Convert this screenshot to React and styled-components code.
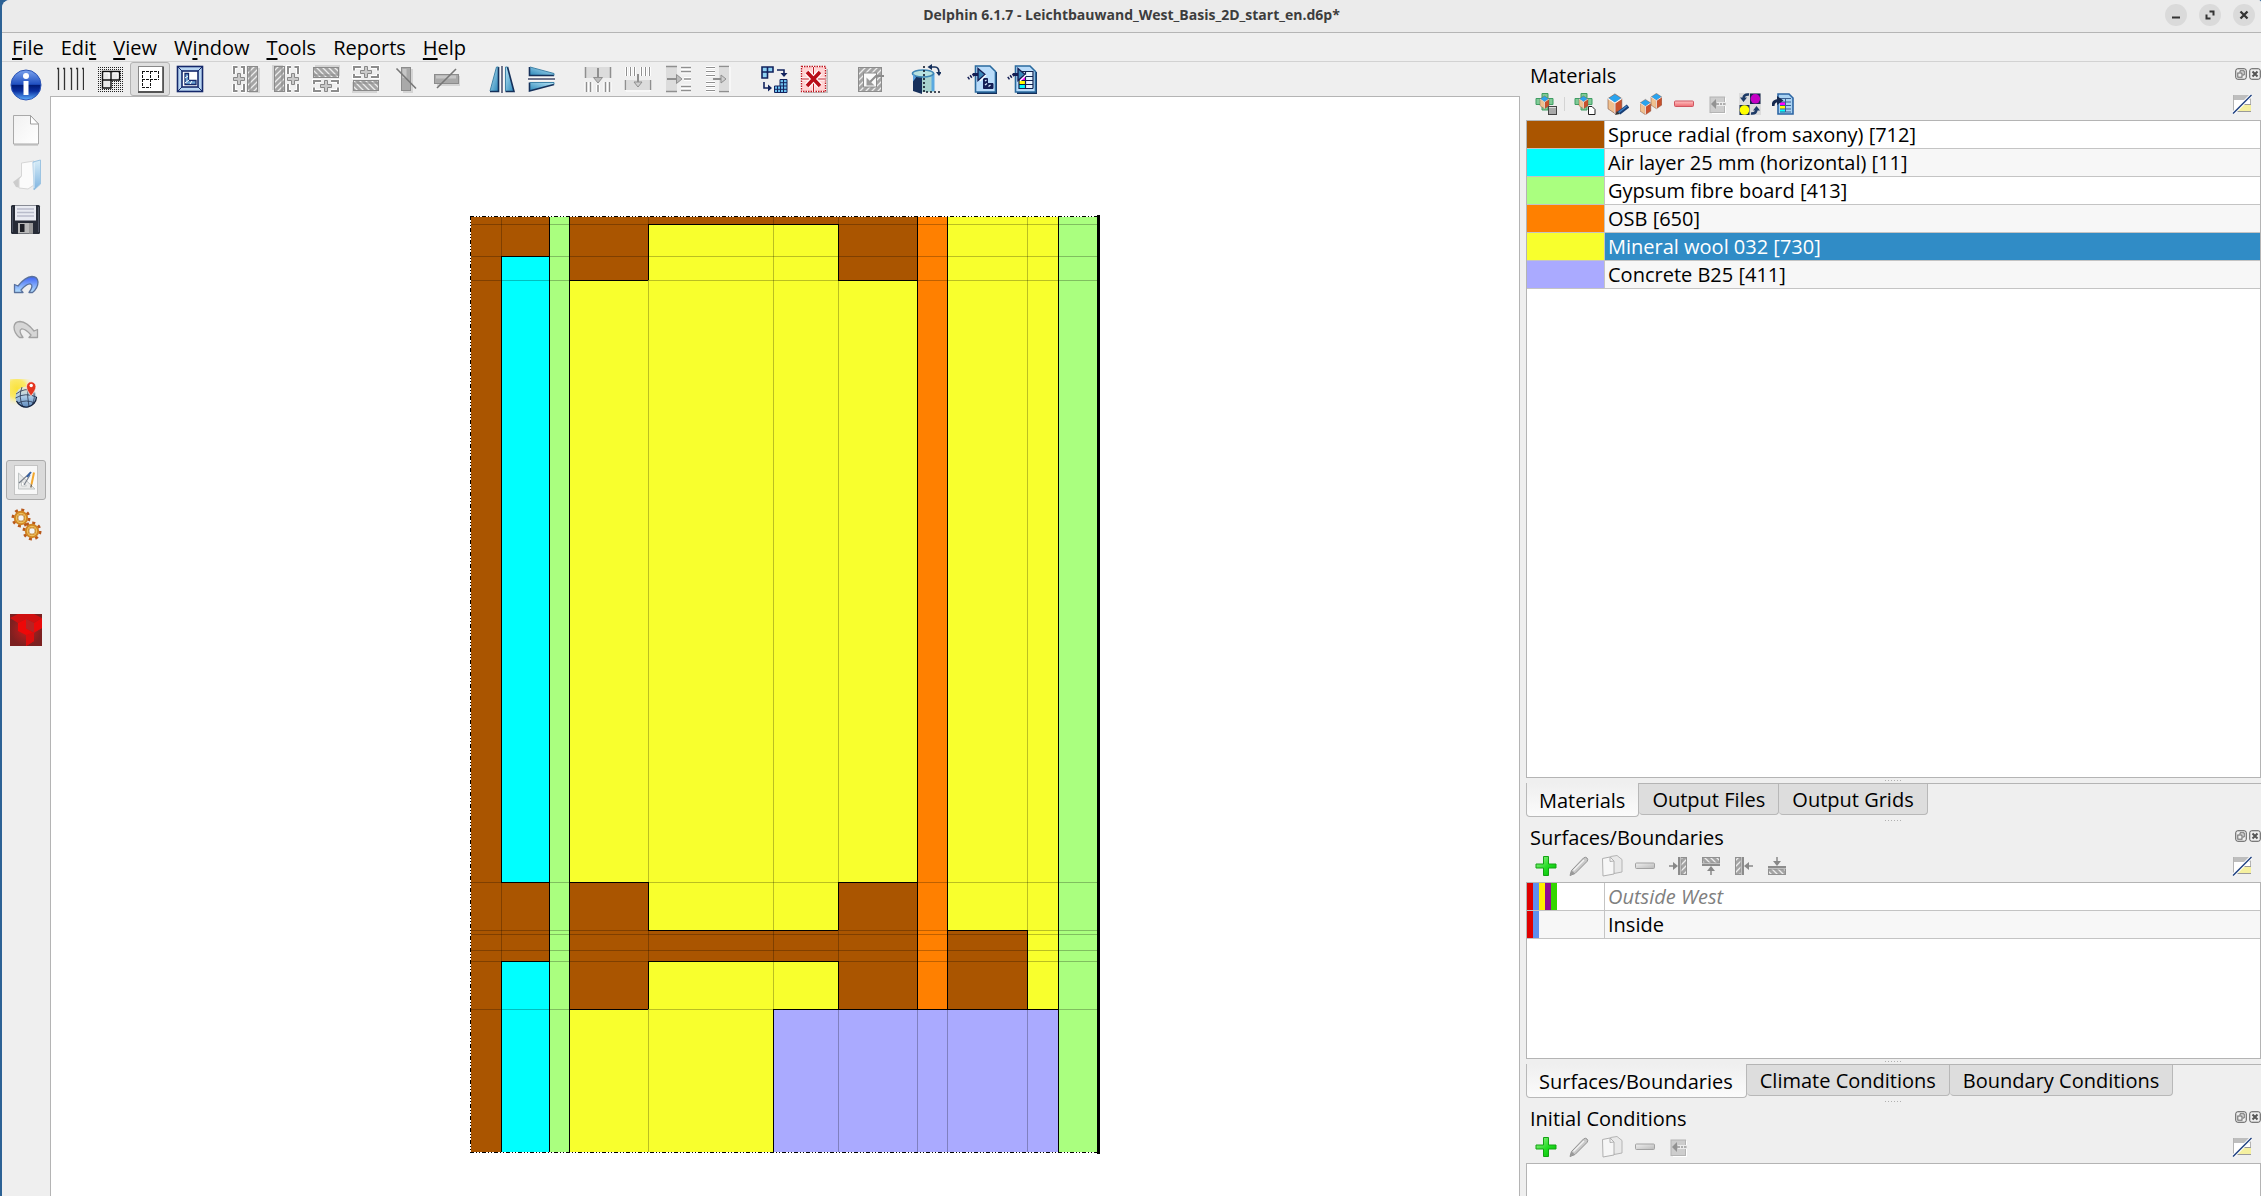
import { useState } from "react";
import styled, { createGlobalStyle } from "styled-components";

const MATERIALS = {
  W: "#aa5500",
  A: "#00ffff",
  G: "#aaff7f",
  O: "#ff8000",
  Y: "#f8ff2d",
  C: "#aaaaff",
};

const materialRows = [
  { color: MATERIALS.W, name: "Spruce radial (from saxony) [712]" },
  { color: MATERIALS.A, name: "Air layer 25 mm (horizontal) [11]" },
  { color: MATERIALS.G, name: "Gypsum fibre board [413]" },
  { color: MATERIALS.O, name: "OSB [650]" },
  { color: MATERIALS.Y, name: "Mineral wool 032 [730]" },
  { color: MATERIALS.C, name: "Concrete B25 [411]" },
];

const surfaceRows = [
  {
    stripes: ["#e00000", "#5f8fee", "#ffee00", "#8f0a94", "#33d600"],
    name: "Outside West",
    muted: true,
  },
  { stripes: ["#e00000", "#5f8fee"], name: "Inside" },
];

// grid lines of the construction and the material of each cell
const gridX = [0, 31, 79, 99, 178, 303, 368, 447, 477, 557, 588, 628];
const gridY = [1, 9, 41, 65, 667, 715, 719, 735, 746, 794, 937];
const cells = [
  "WWGWWWWOYYG",
  "WWGWYYWOYYG",
  "WAGWYYWOYYG",
  "WAGYYYYOYYG",
  "WWGWYYWOYYG",
  "WWGWWWWOWYG",
  "WWGWWWWOWYG",
  "WWGWWWWOWYG",
  "WAGWYYWOWYG",
  "WAGYYCCCCCG",
];

const Construction = () => {
  const fills = [];
  const edges = [];
  cells.forEach((row, r) => {
    [...row].forEach((cell, c) => {
      const x = gridX[c];
      const y = gridY[r];
      const w = gridX[c + 1] - x;
      const h = gridY[r + 1] - y;
      fills.push(
        <rect key={`f${r}-${c}`} x={x} y={y} width={w} height={h} fill={MATERIALS[cell]} />
      );
      if (c > 0) {
        const differs = row[c - 1] !== cell;
        edges.push(
          <rect key={`v${r}-${c}`} x={x} y={y} width="1" height={h} fillOpacity={differs ? 1 : 0.25} />
        );
      }
      if (r > 0) {
        const differs = cells[r - 1][c] !== cell;
        edges.push(
          <rect key={`h${r}-${c}`} x={x} y={y} width={w} height="1" fillOpacity={differs ? 1 : 0.25} />
        );
      }
    });
  });
  return (
    <svg width="630" height="939" shapeRendering="crispEdges" role="img" aria-label="Construction">
      {fills}
      {edges}
      <path d="M0 1.5H628M0 937.5H628M.5 1V938" fill="none" stroke="#fff" />
      <path
        d="M0 1.5H628M0 937.5H628M.5 1V938"
        fill="none"
        stroke="#000"
        strokeDasharray="4 2 1 2 1 2"
      />
      <rect x="627" y="0" width="3" height="939" />
    </svg>
  );
};

/* ---------- icons ---------- */

const SharedDefs = () => (
  <Defs aria-hidden="true">
    <defs>
      <pattern id="hatch" width="6" height="6" patternUnits="userSpaceOnUse">
        <rect width="6" height="6" fill="#a4a4a4" />
        <path d="M-1 7 7 -1M-1 1 1 -1M5 7 7 5" stroke="#ececec" strokeWidth="1.3" />
      </pattern>
      <pattern id="dots" width="2" height="2" patternUnits="userSpaceOnUse">
        <rect width="2" height="2" fill="#efefef" />
        <rect width="1" height="1" fill="#222" />
      </pattern>
      <linearGradient id="blueTri" x1="0" y1="0" x2="1" y2="1">
        <stop offset="0" stopColor="#b9e6f7" />
        <stop offset="1" stopColor="#2a86b8" />
      </linearGradient>
      <linearGradient id="info" x1="0" y1="0" x2="0" y2="1">
        <stop offset="0" stopColor="#7ba3ee" />
        <stop offset=".48" stopColor="#1f4fc0" />
        <stop offset=".5" stopColor="#001a73" />
        <stop offset=".7" stopColor="#0a2fa0" />
        <stop offset="1" stopColor="#5fb0ff" />
      </linearGradient>
      <linearGradient id="undo" x1="0" y1="0" x2="0" y2="1">
        <stop offset="0" stopColor="#3c62f5" />
        <stop offset="1" stopColor="#b8e4ff" />
      </linearGradient>
      <linearGradient id="paper" x1="0" y1="0" x2="1" y2="1">
        <stop offset="0" stopColor="#f1f1f1" />
        <stop offset="1" stopColor="#ffffff" />
      </linearGradient>
      <linearGradient id="folder" x1="0" y1="0" x2="0" y2="1">
        <stop offset="0" stopColor="#d8edf8" />
        <stop offset="1" stopColor="#7fb4e0" />
      </linearGradient>
      <linearGradient id="globe" x1="0" y1="0" x2="0" y2="1">
        <stop offset="0" stopColor="#f1eccb" />
        <stop offset=".5" stopColor="#a9c9e6" />
        <stop offset="1" stopColor="#5a87bb" />
      </linearGradient>
      <radialGradient id="sun" cx=".25" cy=".35" r=".65">
        <stop offset="0" stopColor="#fae23a" />
        <stop offset=".5" stopColor="#fbe968" />
        <stop offset="1" stopColor="#efefef" stopOpacity="0" />
      </radialGradient>
      <linearGradient id="green" x1="0" y1="0" x2="1" y2="1">
        <stop offset="0" stopColor="#a8f09a" />
        <stop offset=".55" stopColor="#22dd22" />
        <stop offset="1" stopColor="#00b800" />
      </linearGradient>
      <linearGradient id="red" x1="0" y1="0" x2="0" y2="1">
        <stop offset="0" stopColor="#ffc4c4" />
        <stop offset="1" stopColor="#ee6a70" />
      </linearGradient>
      <linearGradient id="grey" x1="0" y1="0" x2="1" y2="1">
        <stop offset="0" stopColor="#f0f0f0" />
        <stop offset="1" stopColor="#b9b9b9" />
      </linearGradient>
      <radialGradient id="maroon">
        <stop offset="0" stopColor="#c41c1c" />
        <stop offset="1" stopColor="#7c2020" />
      </radialGradient>
    </defs>
  </Defs>
);

const Icon = ({ size = 28, children }) => (
  <svg width={size} height={size} viewBox={`0 0 ${size} ${size}`} fill="none" aria-hidden="true">
    {children}
  </svg>
);

const GridLinesIcon = () => (
  <Icon>
    {[2, 8, 15, 21, 27].map((x) => (
      <path key={x} d={`M${x - 1} 3.5h1.5V25`} stroke="#333" strokeWidth="1.3" />
    ))}
  </Icon>
);

const DottedShapeIcon = () => (
  <Icon>
    <rect x="2" y="2" width="26" height="26" fill="url(#dots)" />
    <path d="M6.5 6.5h17v8.5h-8.5v8h-8.5z" fill="#e9e9e9" stroke="#111" strokeWidth="1.4" />
    <path d="M15 6.5v8.5M6.5 15h8.5" stroke="#111" strokeWidth="1.4" />
    <path d="M8 8h5v5M17 8h5v5" stroke="#fff" />
  </Icon>
);

const DashedShapeIcon = () => (
  <Icon>
    <rect x="2.5" y="1.5" width="24" height="25" fill="#fff" stroke="#888" />
    <path d="M2 27h25.5V1.5" stroke="#555" strokeWidth="2" />
    <path
      d="M6 6.5h17M6 14.5h17M6 22.5h9M6.5 6v17M14.5 6v17M22.5 6v9"
      stroke="#111"
      strokeDasharray="3 1"
      shapeRendering="crispEdges"
    />
  </Icon>
);

const FrameIcon = () => (
  <Icon>
    <rect x="1.5" y="1.5" width="25" height="25" fill="#b9d6f2" stroke="#15296b" strokeWidth="1.6" />
    <path d="M2 2l5 5M26 2l-5 5M2 26l5-5M26 26l-5-5" stroke="#15296b" />
    <rect x="6" y="6" width="16" height="16" fill="#fff" stroke="#15296b" strokeWidth="1.6" />
    <path d="M9 8.5h3.5v7H20v4H9z" fill="#6fa6d6" stroke="#15296b" strokeWidth="1.3" />
    <path d="M9 13l3-2M9 18l4-3M14 19l2-3" stroke="#fff" />
  </Icon>
);

const Plus = ({ x, y }) => (
  <path
    d={`M${x - 1.5} ${y - 5.5}h3v4h4v3h-4v4h-3v-4h-4v-3h4z`}
    fill="#c9c9c9"
    stroke="#888"
  />
);

const InsertIcon = ({ turn }) => (
  <Icon>
    <g transform={`rotate(${turn} 14 14)`}>
      <path d="M17 28h10V3" stroke="#d4d4d4" strokeWidth="2" />
      <rect x="15.5" y="1.5" width="10" height="25" fill="url(#hatch)" stroke="#8a8a8a" />
      <path d="M18 2v24" stroke="#8a8a8a" />
      <path d="M2 9V2h3.5M9 2h3v7M2 19v7h3.5M9 26h3v-7" stroke="#fff" strokeWidth="4" />
      <path d="M2 9V2h3.5M9 2h3v7M2 19v7h3.5M9 26h3v-7" stroke="#8d8d8d" strokeWidth="2" />
      <Plus x={7} y={14} />
    </g>
  </Icon>
);

const SplitIcon = ({ flat }) => (
  <Icon>
    {flat ? (
      <>
        <path d="M5 20h23V11" stroke="#d4d4d4" strokeWidth="2" />
        <rect x="2.5" y="9.5" width="24" height="9" fill="#a9a9a9" stroke="#8c8c8c" />
        <path d="M4 12h20" stroke="#c6c6c6" strokeWidth="3" />
        <path d="M5 23 24 4" stroke="#777" strokeWidth="1.6" />
      </>
    ) : (
      <>
        <path d="M11 27h9V4" stroke="#d4d4d4" strokeWidth="2" />
        <rect x="9.5" y="2.5" width="9" height="23" fill="#a9a9a9" stroke="#8c8c8c" />
        <path d="M12.5 4v9" stroke="#c6c6c6" strokeWidth="4" />
        <path d="M4.5 3.5 24 23.5" stroke="#777" strokeWidth="1.6" />
      </>
    )}
  </Icon>
);

const MirrorIcon = ({ turn }) => (
  <Icon>
    <g transform={`rotate(${turn} 14 14)`}>
      <path d="M10.5 2v24.5H2L8.5 2z" fill="url(#blueTri)" />
      <path d="M10.5 2v24.5H2" stroke="#15305a" strokeWidth="1.6" />
      <path d="M2 26 8.5 2h2" stroke="#3f83a8" />
      <path d="M17.5 2v24.5H26L19.5 2z" fill="url(#blueTri)" />
      <path d="M17.5 26.5H26L19.5 2" stroke="#15305a" strokeWidth="1.6" />
      <path d="M17.5 26V2h2" stroke="#3f83a8" />
      <path d="M14 1v27" stroke="#fff" strokeWidth="3" />
      <path d="M14 1v27" stroke="#111a40" strokeWidth="1.2" />
    </g>
  </Icon>
);

const MergeIcon = ({ turn, late }) => (
  <Icon>
    <g transform={`rotate(${turn} 14 14)`}>
      {late ? (
        <>
          <path d="M2.5 2v9M6.5 2v9M10.5 2v9M17.5 2v9M21.5 2v9M25.5 2v9" stroke="#fff" strokeWidth="3" />
          <path d="M2.5 2v9M6.5 2v9M10.5 2v9M17.5 2v9M21.5 2v9M25.5 2v9" stroke="#8f8f8f" />
          <rect x="2" y="15" width="24" height="10" fill="#dcdcdc" />
          <path d="M2 15v11h24V15" stroke="#fff" />
          <path d="M1.5 15v10M26.5 15v10" stroke="#8f8f8f" strokeWidth="1.5" />
          <path d="M14 9v9" stroke="#8f8f8f" strokeWidth="2" />
          <path d="M10 17h8l-4 5z" fill="#cfcfcf" stroke="#8f8f8f" />
        </>
      ) : (
        <>
          <rect x="2" y="2" width="24" height="11" fill="#dcdcdc" />
          <path d="M1.5 2v11M26.5 2v11" stroke="#8f8f8f" strokeWidth="1.5" />
          <path d="M2.5 17v10M6.5 17v10M14 20v7M21.5 17v10M25.5 17v10" stroke="#fff" strokeWidth="4" />
          <path d="M2.5 17v10M6.5 17v10M14 20v7M21.5 17v10M25.5 17v10" stroke="#8f8f8f" strokeWidth="1.5" />
          <path d="M14 3v10" stroke="#8f8f8f" strokeWidth="2" />
          <path d="M9.5 12.5h9L14 18z" fill="#bdbdbd" stroke="#8f8f8f" />
        </>
      )}
    </g>
  </Icon>
);

const RefineGridIcon = () => (
  <Icon>
    <path d="M2 2h11v5H7.5v6H2z" fill="#8fd3f5" stroke="#12235e" strokeWidth="1.6" />
    <path d="M7.5 2v5H2M7.5 7v1" stroke="#12235e" strokeWidth="1.6" />
    <path d="M17 5h7v4M4 17v6h5" stroke="#12235e" strokeWidth="1.6" />
    <path d="M20.5 8h7L24 12zM8 19.5v7l4-3.5z" fill="#12235e" />
    <path d="M20 14.5h7v13H14.5V21H20z" fill="#6dc0ee" />
    <path d="M20 14.5h7v13H14.5V21H20zM14.5 24.3H27M20 17.7h7M20 21h7M17.5 21v6.5M20.5 21v6.5M23.5 14.5v13" stroke="#12235e" />
  </Icon>
);

const RemoveGridIcon = () => (
  <Icon>
    <path d="M4 27.5h23.5V4" stroke="#bdbdbd" strokeWidth="2" />
    <rect x="1.5" y="1.5" width="24" height="25" fill="#ffd3d3" stroke="#fff" />
    <rect x="1.5" y="1.5" width="24" height="25" stroke="#c01822" strokeDasharray="1.5 1" strokeWidth="1.3" />
    <path d="M13.5 2v25M2 14h24" stroke="#fff" strokeWidth="3" />
    <path d="M13.5 2v25M2 14h24" stroke="#c01822" strokeWidth="1.2" />
    <path d="M7 7 20 21M20 7 7 21" stroke="#fff" strokeWidth="6" />
    <path d="M7 7 20 21M20 7 7 21" stroke="#b80d18" strokeWidth="3.6" />
  </Icon>
);

const AssignIcon = () => (
  <Icon>
    <rect x="2.5" y="2.5" width="23" height="24" fill="url(#hatch)" stroke="#8c8c8c" />
    <rect x="7.5" y="8" width="13" height="14" fill="#fafafa" stroke="#8c8c8c" />
    <path d="M28 11h-8l-8 8" stroke="#8c8c8c" strokeWidth="2" />
    <path d="M10.5 12.5v8h8z" fill="#9b9b9b" />
  </Icon>
);

const CylinderIcon = () => (
  <Icon size={30}>
    <path d="M2 10v17l9 3V10z" fill="#16305c" />
    <path d="M11 10v18h12V10z" fill="#a7d3cf" />
    <path d="M22 9v18" stroke="#5aa9e0" strokeWidth="3" />
    <ellipse cx="12" cy="9.5" rx="10.5" ry="3.5" fill="#b8e2e0" stroke="#3f86b4" strokeWidth="1.6" />
    <path d="M2 9.5v8l3-4" fill="#58a0dc" />
    <path d="M13 2v26h17" stroke="#101828" strokeWidth="1.6" strokeDasharray="2 2" />
    <path d="M20 3h4q4 0 4 6" stroke="#16305c" strokeWidth="1.6" />
    <path d="M16.5 3 21 0v6zM25 8h6l-3 4z" fill="#16305c" />
  </Icon>
);

const ImportPageIcon = ({ table }) => (
  <Icon size={30}>
    <path d="M10 29h19V8" stroke="#14305c" strokeWidth="2" />
    <path d="M8.5 2h14.5l5.5 5.5V28H8.5z" fill="#b9dcfa" stroke="#2a6a9e" strokeWidth="1.6" />
    {table ? (
      <>
        <rect x="13" y="7" width="13" height="17" fill="#e8f4ff" />
        <rect x="12" y="13" width="6" height="3.5" fill="#f0f" />
        <rect x="12" y="17" width="6" height="3.5" fill="#ff0" />
        <rect x="12" y="21" width="6" height="3.5" fill="#0ff" />
        <path d="M12 12.5h14M12 16.5h14M12 20.5h14M12 24.5h14M15 7.5h11v17M18.5 8v17M12 13v12" stroke="#0f2350" strokeWidth="1.2" />
      </>
    ) : (
      <>
        <path d="M16.5 14.5h4v5H26v5h-9.5z" fill="#141f55" stroke="#141f55" />
        <path d="M18 17l1.5-1M18 21l2-1.5M21.500 22.500l2-1.500" stroke="#d8ebfb" strokeWidth="1.3" />
      </>
    )}
    <path d="M1 14.5 7 10.5h5" stroke="#141f55" strokeWidth="3" strokeDasharray="1.5 1.3" />
    <path d="M6 10.5h6" stroke="#141f55" strokeWidth="3" />
    <path d="M11 4.5 18 10.5l-7 6z" fill="#3a86b8" stroke="#141f55" strokeWidth="1.4" />
    <path d="M13 17l6-6" stroke="#fff" strokeWidth="1.2" />
  </Icon>
);

const InfoIcon = () => (
  <Icon size={32}>
    <circle cx="16" cy="16" r="15" fill="url(#info)" stroke="#2d55b5" />
    <circle cx="16" cy="7" r="3" fill="#fff" />
    <path d="M16 12v14" stroke="#fff" strokeWidth="5" />
  </Icon>
);

const NewIcon = () => (
  <Icon size={32}>
    <path d="M4 31h24" stroke="#c6c6c6" strokeWidth="1.5" />
    <path d="M3.5 1.5h17l8 8.5v20h-25z" fill="url(#paper)" stroke="#a9a9a9" />
    <path d="M20.5 1.5V10h8z" fill="#fff" stroke="#a0a0a0" />
  </Icon>
);

const OpenIcon = () => (
  <Icon size={32}>
    <path d="M3 23l8-6v12l-5-1z" fill="#bdbdbd" opacity=".7" />
    <path d="M11.5 4 24 2v24l-6 4-9-1v-9l2.5-3z" fill="#fbfbfb" stroke="#d6d6d6" />
    <path d="M23 3l7.5-2v24L24 31z" fill="url(#folder)" stroke="#9cc4e2" />
    <path d="M24 4v25" stroke="#fff" opacity=".7" />
  </Icon>
);

const SaveIcon = () => (
  <Icon size={32}>
    <rect x="1" y="1" width="29" height="29" rx="1.5" fill="#262b36" />
    <path d="M2.5 3v25M28.5 3v25" stroke="#4b5160" />
    <rect x="5" y="1.5" width="21" height="15" fill="#e9ebf2" />
    <path d="M7 5h17M7 8.5h17M7 12h17" stroke="#b9bccb" strokeWidth="1.3" />
    <rect x="8" y="19" width="15" height="10.5" fill="#b9b9b9" />
    <rect x="10" y="20" width="4.5" height="8" fill="#1d1f26" />
    <path d="M19 19h4v10.5h-4z" fill="#9a9a9a" />
  </Icon>
);

const UndoIcon = ({ redo }) => (
  <Icon size={32}>
    <g transform={redo ? "translate(32 0) scale(-1 1)" : undefined}>
      <path
        d="M4.5 15.5v8h8.5l-2-2.5q6-6.5 9.5-6 3.5 1.5-1.5 8.5h3.5q5.5-4.5 5.5-10.5-.5-5.5-6-5.500-7 .5-14 9.500z"
        fill={redo ? "#d6d6d6" : "url(#undo)"}
        stroke={redo ? "#a2a2a2" : "#59719c"}
        strokeWidth="1.3"
        strokeLinejoin="round"
      />
    </g>
  </Icon>
);

const GlobeIcon = () => (
  <Icon size={32}>
    <rect x="0" y="0" width="28" height="28" fill="url(#sun)" />
    <circle cx="16" cy="18" r="10.5" fill="url(#globe)" />
    <path d="M6 15q9-7 18-3M5.5 19q10-6 21-1M8 24q8-4 17 0M12 8q-4 10 1 20M18 8q-1 10 1 20M23 11q3 8-1 15" stroke="#26344f" strokeWidth=".8" />
    <path d="M26.5 18a10.5 10.5 0 0 1-20 4" stroke="#16233d" strokeWidth="1.3" />
    <path d="M21 17q-4.5-6-4.5-9.5a4.700 4.700 0 0 1 9.400 0Q26 11 21 17z" fill="#e4351f" stroke="#fff" strokeWidth=".6" />
    <circle cx="21.2" cy="6.5" r="1.7" fill="#fff" />
  </Icon>
);

const DrawIcon = () => (
  <Icon size={32}>
    <rect x="4.5" y="1.5" width="23" height="29" fill="#f8f8f8" stroke="#c4c4c4" />
    <path d="M8.5 9v16H25z" fill="#e9eaea" stroke="#bfc4c4" />
    <path d="M11.5 17v5h5z" fill="#fff" stroke="#c6caca" />
    <path d="M9 19 20 9M14 21l6-10" stroke="#7b828c" strokeWidth="1.2" />
    <path d="M17 13l4-5" stroke="#3360a6" strokeWidth="2" />
    <path d="M24 8.5l-2.5 12" stroke="#f2a72e" strokeWidth="2" />
    <path d="M21.5 20.5l-.7 3" stroke="#6c5a40" strokeWidth="1.2" />
  </Icon>
);

const Gear = ({ x, y }) => (
  <g transform={`translate(${x} ${y})`}>
    <circle r="8" stroke="#b8581a" strokeWidth="3" strokeDasharray="2.9 3.383" />
    <circle r="5.2" fill="#efefef" stroke="#d08524" strokeWidth="4" />
    <circle r="4.6" stroke="#edc05a" strokeWidth="1.2" />
    <circle r="3" fill="#f4f4f4" stroke="#c79a50" strokeWidth=".7" />
  </g>
);

const GearsIcon = () => (
  <Icon size={34}>
    <Gear x={12} y={10} />
    <Gear x={23} y={23} />
  </Icon>
);

const CubesIcon = () => (
  <Icon size={32}>
    <rect width="32" height="32" fill="url(#maroon)" />
    <path d="M0 4l8-4h16l8 4-8 5-8-4-8 4z" fill="#cf1010" />
    <path d="M8 9l8-4v9l8 5v8l-8 5V21l-8-4z" fill="#ee0808" />
    <path d="M24 9l8-5v10l-8 5-8-5V5z" fill="#b52020" />
    <path d="M24 9l8-5v10l-8 4.5z" fill="#ea0a0a" />
    <path d="M16 5l8 4v9.5l-8-4z" fill="#b82222" />
    <path d="M16 21l8-3v9l-8 5z" fill="#da0d0d" />
  </Icon>
);

const Cube = ({ x, y, s = 1 }) => (
  <g transform={`translate(${x} ${y}) scale(${s})`} stroke="#7a4a35" strokeWidth=".5">
    <path d="M0 0l6-4 6 4-6 4z" fill="#29a3ee" />
    <path d="M0 0l6 4v9l-6-4z" fill="#f0c08f" />
    <path d="M12 0l-6 4v9l6-4z" fill="#c8502c" />
    <path d="M0 0l6 4 6-4M6 4v9" stroke="#fff" strokeWidth=".9" />
  </g>
);

const GreenCross = () => (
  <path d="M7 .5h6v5h5v6h-5v5.5H7v-5.5H1v-6h6z" fill="#7fca96" stroke="#3f9d63" />
);

const AddFromDbIcon = () => (
  <Icon size={22}>
    <GreenCross />
    <Cube x={5} y={6} s={0.75} />
    <rect x="13.5" y="13.5" width="8" height="8" fill="#ddd" stroke="#444" />
    <path d="M14 16h7M14 18h7M14 20h7" stroke="#777" />
  </Icon>
);

const AddNewIcon = () => (
  <Icon size={22}>
    <GreenCross />
    <Cube x={5} y={6} s={0.75} />
    <path d="M14.5 13.5h3.5l3 3v5h-6.5z" fill="#fff" stroke="#222" />
  </Icon>
);

const EditMaterialIcon = () => (
  <Icon size={22}>
    <Cube x={1} y={5.5} s={1.15} />
    <path d="M21 13l-9 7" stroke="#173d73" strokeWidth="4" />
    <path d="M20 13l-9 7" stroke="#3a7fc4" strokeWidth="1.5" />
    <path d="M8 22l2-4 3 3z" fill="#333" />
  </Icon>
);

const CopyMaterialIcon = () => (
  <Icon size={22}>
    <Cube x={11} y={4} s={0.9} />
    <Cube x={0} y={10} s={0.9} />
  </Icon>
);

const MinusIcon = ({ red }) => (
  <Icon size={22}>
    <rect
      x="1.5"
      y="8"
      width="19"
      height="5.5"
      rx="1"
      fill={red ? "url(#red)" : "url(#grey)"}
      stroke={red ? "#cf5560" : "#a2a2a2"}
    />
  </Icon>
);

const AssignSmallIcon = () => (
  <Icon size={22}>
    <path d="M6 20.5h13.500V5" stroke="#fff" />
    <rect x="4" y="4" width="14.5" height="15.5" fill="#cdcdcd" stroke="#b4b4b4" />
    <path d="M11 11h9" stroke="#ececec" strokeWidth="4" />
    <path d="M10 11h3M14 11h2M17 11h2.5" stroke="#999" strokeWidth="1.5" />
    <path d="M5 11l5-5v10z" fill="#929292" />
  </Icon>
);

const SwapIcon = () => (
  <Icon size={22}>
    <rect width="22" height="22" fill="#dcdcdc" />
    <rect x="11" y=".5" width="10.5" height="10.5" fill="#17284d" />
    <circle cx="16.3" cy="5.8" r="4.8" fill="#c400c4" />
    <rect x=".5" y="12" width="10" height="10" fill="#17284d" />
    <circle cx="5.5" cy="17" r="4.8" fill="#ff0" />
    <path d="M10 1.5Q5 1 4.5 5M12 20.5q5 .5 5.5-4" stroke="#1d3a66" strokeWidth="2.5" />
    <path d="M1 4.5h7L4.5 9zM14 17.5h7L17.5 13z" fill="#1d3a66" />
  </Icon>
);

const ImportMaterialIcon = () => (
  <Icon size={22}>
    <path d="M6 1h11l4 4v16H6z" fill="#a9d2f2" stroke="#2d66a4" strokeWidth="1.6" />
    <rect x="8" y="9" width="5" height="3" fill="#f0f" />
    <rect x="8" y="13" width="5" height="3" fill="#ff0" />
    <rect x="8" y="16.5" width="5" height="3" fill="#0ff" />
    <path d="M8 5.5h11M8 9h11M8 12.5h11M8 16h11M8 19h11M13.5 5v14" stroke="#3a5f92" />
    <path d="M1 13Q1 8 6 7.5" stroke="#16294f" strokeWidth="3" />
    <path d="M5 3l6.5 4.5L5 12z" fill="#16294f" />
  </Icon>
);

const AddIcon = () => (
  <Icon size={22}>
    <path
      d="M8.5 1.5h5v7.5H21v4h-7.5v7.5h-5V13H1V9h7.5z"
      fill="url(#green)"
      stroke="#12a312"
      strokeLinejoin="round"
    />
  </Icon>
);

const PencilIcon = () => (
  <Icon size={22}>
    <path d="M2 20.5l1.5-5L15.5 3q2-1.5 3.5 0t0 3.5L7 18.5z" fill="#c9c9c9" stroke="#909090" />
    <path d="M5.5 15.5 16 5" stroke="#f2f2f2" strokeWidth="1.5" />
    <path d="M2 20.5l1.5-5L7 18.5z" fill="#9a9a9a" />
  </Icon>
);

const CopyIcon = () => (
  <Icon size={22}>
    <path d="M9.5 1.5 16 .5l5 4V17l-8 1.5z" fill="#e8e8e8" stroke="#b4b4b4" />
    <path d="M1.5 3.5 9 2l4 4v13L2 21z" fill="#f6f6f6" stroke="#b0b0b0" />
    <path d="M9 2v4.5l4-.5" stroke="#b0b0b0" />
  </Icon>
);

const EdgeIcon = ({ turn }) => (
  <Icon size={22}>
    <g transform={`rotate(${turn} 11 11)`}>
      <path d="M12 2v18" stroke="#8c8c8c" strokeWidth="2" />
      <rect x="14" y="2.5" width="5.5" height="17" fill="url(#hatch)" stroke="#909090" />
      <path d="M2 11h6" stroke="#888" strokeWidth="1.5" />
      <path d="M6 7l5 4-5 4z" fill="#888" />
    </g>
  </Icon>
);

const HideIcon = () => (
  <Icon size={20}>
    <rect x="1" y="1" width="18" height="17" fill="#fff" />
    <path d="M1 1h18v5H1z" fill="#bebebe" />
    <path d="M1.5 1v17M18.5 1v17" stroke="#b4b4b4" />
    <path d="M7 11h12v6H5z" fill="#f5f0a0" />
    <path d="M9 10.5h10M3 17.5h16" stroke="#9a9a9a" />
    <path d="M1 19.5 19.5 1" stroke="#fff" strokeWidth="3.5" />
    <path d="M1 19.5 19.5 1" stroke="#1f4080" strokeWidth="1.5" />
  </Icon>
);

const FloatIcon = () => (
  <Icon size={12}>
    <rect x=".75" y=".75" width="10.5" height="10.5" rx="2" stroke="#555" />
    <rect x="2.8" y="5" width="4.2" height="4.2" stroke="#666" />
    <path d="M5 4.5V2.8h4.200V7H7.5" stroke="#666" />
  </Icon>
);

const DockCloseIcon = () => (
  <Icon size={12}>
    <rect x=".75" y=".75" width="10.5" height="10.5" rx="2" stroke="#555" />
    <path d="M3.5 3.5l5 5M8.5 3.5l-5 5" stroke="#555" strokeWidth="2" />
  </Icon>
);

/* ---------- data driven bars ---------- */

const mainTools = [
  [
    ["Grid lines", <GridLinesIcon />],
    ["Show discretization", <DottedShapeIcon />],
    ["Show construction", <DashedShapeIcon />, true],
    ["Scale frame", <FrameIcon />],
  ],
  [
    ["Insert column left", <InsertIcon turn={0} />],
    ["Insert column right", <InsertIcon turn={180} />],
    ["Insert row below", <InsertIcon turn={-90} />],
    ["Insert row above", <InsertIcon turn={90} />],
    ["Split column", <SplitIcon />],
    ["Split row", <SplitIcon flat />],
  ],
  [
    ["Mirror horizontally", <MirrorIcon turn={0} />],
    ["Mirror vertically", <MirrorIcon turn={90} />],
  ],
  [
    ["Expand columns", <MergeIcon turn={0} />],
    ["Merge columns", <MergeIcon turn={0} late />],
    ["Expand rows", <MergeIcon turn={-90} />],
    ["Merge rows", <MergeIcon turn={-90} late />],
  ],
  [
    ["Generate grid", <RefineGridIcon />],
    ["Remove grid", <RemoveGridIcon />],
  ],
  [["Assign selection", <AssignIcon />]],
  [["Rotational symmetry", <CylinderIcon />]],
  [
    ["Import geometry", <ImportPageIcon />],
    ["Import table", <ImportPageIcon table />],
  ],
];

const sideTools = [
  { label: "Welcome", icon: <InfoIcon /> },
  { label: "New", icon: <NewIcon /> },
  { label: "Open", icon: <OpenIcon /> },
  { label: "Save", icon: <SaveIcon /> },
  { label: "Undo", icon: <UndoIcon />, space: 20 },
  { label: "Redo", icon: <UndoIcon redo /> },
  { label: "Location", icon: <GlobeIcon />, space: 20 },
  { label: "Construction view", icon: <DrawIcon />, space: 40, active: true },
  { label: "Simulation", icon: <GearsIcon /> },
  { label: "Post processing", icon: <CubesIcon />, space: 60 },
];

const menus = [
  ["", "F", "ile"],
  ["Edi", "t", ""],
  ["", "V", "iew"],
  ["W", "i", "ndow"],
  ["", "T", "ools"],
  ["Reports", "", ""],
  ["", "H", "elp"],
];

const DockHeader = ({ title, children }) => (
  <>
    <DockTitle>
      <h2>{title}</h2>
      <DockButton aria-label={`Float ${title}`}>
        <FloatIcon />
      </DockButton>
      <DockButton aria-label={`Close ${title}`}>
        <DockCloseIcon />
      </DockButton>
    </DockTitle>
    <DockTools>
      {children}
      <HideButton aria-label={`Filter ${title}`}>
        <HideIcon />
      </HideButton>
    </DockTools>
  </>
);

const Tool = ({ label, children }) => <SmallTool aria-label={label}>{children}</SmallTool>;

const TabRow = ({ tabs }) => {
  const [current, setCurrent] = useState(tabs[0]);
  return (
    <Tabs role="tablist">
      {tabs.map((tab) => (
        <Tab
          key={tab}
          role="tab"
          aria-selected={tab === current}
          $active={tab === current}
          onClick={() => setCurrent(tab)}
        >
          {tab}
        </Tab>
      ))}
    </Tabs>
  );
};

const App = () => {
  const [selected, setSelected] = useState(4);
  return (
    <Frame>
      <GlobalStyle />
      <SharedDefs />
      <TitleBar>
        <h1>Delphin 6.1.7 - Leichtbauwand_West_Basis_2D_start_en.d6p*</h1>
        <WindowButtons>
          <WindowButton aria-label='Minimize'>
            <Icon size={12}>
              <path d="M2 8.5h8" stroke="#333" strokeWidth="2" />
            </Icon>
          </WindowButton>
          <WindowButton aria-label='Restore'>
            <Icon size={12}>
              <path d="M5.5 2.5h4v4M2.5 5.5v4h4" stroke="#333" strokeWidth="2" />
            </Icon>
          </WindowButton>
          <WindowButton aria-label='Close'>
            <Icon size={12}>
              <path d="M2.5 2.5l7 7M9.5 2.5l-7 7" stroke="#333" strokeWidth="2.3" />
            </Icon>
          </WindowButton>
        </WindowButtons>
      </TitleBar>
      <MenuBar>
        {menus.map(([before, key, after]) => (
          <button key={before + key + after}>
            {before}
            {key && <u>{key}</u>}
            {after}
          </button>
        ))}
      </MenuBar>
      <Workspace>
        <SideBar>
          {sideTools.map(({ label, icon, space, active }) => (
            <SideButton key={label} aria-label={label} $space={space} $active={active}>
              {icon}
            </SideButton>
          ))}
        </SideBar>
        <Editor>
          <ToolBar>
            {mainTools.map((group, i) => (
              <ToolGroup key={i}>
                {group.map(([label, icon, active]) => (
                  <ToolButton key={label} aria-label={label} $active={active}>
                    {icon}
                  </ToolButton>
                ))}
              </ToolGroup>
            ))}
          </ToolBar>
          <Canvas>
            <Construction />
          </Canvas>
        </Editor>
        <Splitter />
        <Docks>
          <DockHeader title='Materials'>
            <Tool label='Add material from database'><AddFromDbIcon /></Tool>
            <ToolDivider />
            <Tool label='Add new material'><AddNewIcon /></Tool>
            <Tool label='Edit material'><EditMaterialIcon /></Tool>
            <Tool label='Copy material'><CopyMaterialIcon /></Tool>
            <Tool label='Remove material'><MinusIcon red /></Tool>
            <Tool label='Assign material'><AssignSmallIcon /></Tool>
            <Tool label='Replace material'><SwapIcon /></Tool>
            <Tool label='Import materials'><ImportMaterialIcon /></Tool>
          </DockHeader>
          <ListBox $grow={656}>
            <ItemTable>
              <tbody>
                {materialRows.map(({ color, name }, i) => (
                  <Row key={name} $selected={i === selected} onClick={() => setSelected(i)}>
                    <SwatchCell $color={color} />
                    <td>{name}</td>
                  </Row>
                ))}
              </tbody>
            </ItemTable>
          </ListBox>
          <Handle $size={5} />
          <TabRow tabs={["Materials", "Output Files", "Output Grids"]} />
          <Handle $size={7} />
          <DockHeader title='Surfaces/Boundaries'>
            <Tool label='Add surface'><AddIcon /></Tool>
            <Tool label='Edit surface'><PencilIcon /></Tool>
            <Tool label='Copy surface'><CopyIcon /></Tool>
            <Tool label='Remove surface'><MinusIcon /></Tool>
            <Tool label='Assign left'><EdgeIcon turn={0} /></Tool>
            <Tool label='Assign top'><EdgeIcon turn={-90} /></Tool>
            <Tool label='Assign right'><EdgeIcon turn={180} /></Tool>
            <Tool label='Assign bottom'><EdgeIcon turn={90} /></Tool>
          </DockHeader>
          <ListBox $grow={175}>
            <ItemTable>
              <tbody>
                {surfaceRows.map(({ stripes, name, muted }) => (
                  <Row key={name} $muted={muted}>
                    <SwatchCell>
                      <Stripes>
                        {stripes.map((color) => (
                          <Stripe key={color} $color={color} />
                        ))}
                      </Stripes>
                    </SwatchCell>
                    <td>{name}</td>
                  </Row>
                ))}
              </tbody>
            </ItemTable>
          </ListBox>
          <Handle $size={5} />
          <TabRow tabs={["Surfaces/Boundaries", "Climate Conditions", "Boundary Conditions"]} />
          <Handle $size={7} />
          <DockHeader title='Initial Conditions'>
            <Tool label='Add condition'><AddIcon /></Tool>
            <Tool label='Edit condition'><PencilIcon /></Tool>
            <Tool label='Copy condition'><CopyIcon /></Tool>
            <Tool label='Remove condition'><MinusIcon /></Tool>
            <Tool label='Assign condition'><AssignSmallIcon /></Tool>
          </DockHeader>
          <ListBox $grow={32} $open />
        </Docks>
      </Workspace>
    </Frame>
  );
};

export default App;

const GlobalStyle = createGlobalStyle`
  * {
    box-sizing: border-box;
  }
  body {
    margin: 0;
    background: #2c6295;
    color: #000;
    font-family: "Open Sans", "Noto Sans", sans-serif;
    font-size: 20px;
  }
  button {
    border: 0;
    padding: 0;
    background: none;
    font: inherit;
    color: inherit;
  }
  h1,
  h2 {
    margin: 0;
    font-weight: normal;
  }
  svg {
    display: block;
    flex: none;
  }
`;

const Defs = styled.svg`
  width: 0;
  height: 0;
`;

const Frame = styled.div`
  display: flex;
  flex-direction: column;
  height: 100vh;
  margin-left: 2px;
  overflow: hidden;
  background: #efefef;
  border-radius: 8px 3px 0 0;
`;

const TitleBar = styled.header`
  display: grid;
  grid-template-columns: 1fr auto 1fr;
  flex: none;
  height: 33px;
  padding-bottom: 3px;
  align-items: center;
  background: #ebebeb;
  border-bottom: 1px solid #b5b5b5;
  h1 {
    grid-column: 2;
    font-size: 14px;
    font-weight: bold;
    color: #3d3d3d;
  }
`;

const WindowButtons = styled.div`
  display: flex;
  justify-content: flex-end;
  gap: 12px;
  padding-right: 6px;
`;

const WindowButton = styled.button`
  display: flex;
  align-items: center;
  justify-content: center;
  width: 22px;
  height: 22px;
  border-radius: 50%;
  background: #dadada;
`;

const MenuBar = styled.nav`
  display: flex;
  flex: none;
  gap: 1px;
  height: 29px;
  padding-left: 2px;
  border-bottom: 1px solid #d2d2d2;
  button {
    padding: 2px 8px 0;
    line-height: 26px;
  }
  u {
    text-decoration-thickness: 2px;
    text-underline-offset: 3px;
  }
`;

const Workspace = styled.div`
  display: grid;
  grid-template-columns: 48px 2fr 6px 1fr;
  grid-template-rows: minmax(0, 1fr);
  flex: 1;
  min-height: 0;
`;

const SideBar = styled.aside`
  display: flex;
  flex-direction: column;
  align-items: center;
  gap: 5px;
  padding-top: 3px;
`;

const SideButton = styled.button`
  display: flex;
  align-items: center;
  justify-content: center;
  flex: none;
  width: 40px;
  height: 40px;
  margin-top: ${({ $space = 0 }) => $space}px;
  border: 1px solid ${({ $active }) => ($active ? "#ababab" : "transparent")};
  border-radius: 3px;
  background: ${({ $active }) => ($active ? "#dadada" : "none")};
`;

const Editor = styled.main`
  display: flex;
  flex-direction: column;
  min-width: 0;
`;

const ToolBar = styled.div`
  display: flex;
  flex: none;
  gap: 16px;
  height: 34px;
`;

const ToolGroup = styled.div`
  display: flex;
`;

const ToolButton = styled.button`
  display: flex;
  align-items: center;
  justify-content: center;
  width: 40px;
  height: 34px;
  border: 1px solid ${({ $active }) => ($active ? "#b3b3b3" : "transparent")};
  border-radius: 3px;
  background: ${({ $active }) => ($active ? "#dfdfdf" : "none")};
`;

const Canvas = styled.section`
  display: flex;
  justify-content: center;
  flex: 1;
  min-height: 0;
  padding-top: 118px;
  background: #fff;
  border: 1px solid #b4b4b4;
  border-bottom: 0;
`;

const Splitter = styled.div`
  cursor: col-resize;
`;

const Docks = styled.aside`
  display: flex;
  flex-direction: column;
  min-width: 0;
`;

const DockTitle = styled.div`
  display: flex;
  flex: none;
  align-items: center;
  gap: 2px;
  height: 28px;
  padding-left: 4px;
  h2 {
    flex: 1;
    font-size: 20px;
    line-height: 28px;
  }
`;

const DockButton = styled.button`
  padding-bottom: 4px;
`;

const DockTools = styled.div`
  display: flex;
  flex: none;
  height: 30px;
  padding: 0 9px 2px 3px;
`;

const SmallTool = styled.button`
  display: flex;
  align-items: center;
  justify-content: center;
  width: 33px;
`;

const ToolDivider = styled.span`
  align-self: center;
  width: 1px;
  height: 14px;
  margin: 0 3px 0 2px;
  background: #d4d4d4;
`;

const HideButton = styled.button`
  margin-left: auto;
`;

const ListBox = styled.div`
  flex: ${({ $grow }) => $grow} 1 0;
  min-height: 0;
  overflow: hidden;
  background: #fff;
  border: 1px solid #b4b4b4;
  border-bottom-width: ${({ $open }) => ($open ? 0 : 1)}px;
`;

const ItemTable = styled.table`
  width: 100%;
  table-layout: fixed;
  border-collapse: separate;
  border-spacing: 0;
  td {
    height: 28px;
    padding: 0 3px;
    line-height: 27px;
    border-bottom: 1px solid #c4c4c4;
  }
`;

const Row = styled.tr`
  background: #fff;
  &:nth-child(even) {
    background: #f7f7f7;
  }
  td:last-child {
    ${({ $selected }) => $selected && "background: #308cc6; color: #fff;"}
    ${({ $muted }) => $muted && "color: #808080; font-style: italic;"}
  }
`;

const SwatchCell = styled.td`
  width: 78px;
  border-right: 1px solid #c4c4c4;
  background: ${({ $color = "transparent" }) => $color};
  && {
    padding: 0;
  }
`;

const Stripes = styled.div`
  display: flex;
  height: 27px;
`;

const Stripe = styled.span`
  width: 6px;
  background: ${({ $color }) => $color};
`;

const Handle = styled.div`
  display: flex;
  align-items: center;
  justify-content: center;
  flex: none;
  height: ${({ $size }) => $size}px;
  &:after {
    content: "";
    width: 17px;
    height: 1px;
    background: repeating-linear-gradient(90deg, #b0b0b0 0 1px, transparent 1px 3px);
  }
`;

const Tabs = styled.div`
  display: flex;
  align-items: flex-start;
  flex: none;
  height: 34px;
  border-top: 1px solid #b4b4b4;
`;

const Tab = styled.button`
  height: ${({ $active }) => ($active ? 34 : 31)}px;
  margin-top: ${({ $active }) => ($active ? -1 : 0)}px;
  padding: ${({ $active }) => ($active ? "2px 13px 0 12px" : "0 13px")};
  border: 1px solid #b8b8b8;
  border-top: 0;
  border-left-width: ${({ $active }) => ($active ? 1 : 0)}px;
  border-radius: 0 0 4px 4px;
  background: ${({ $active }) =>
    $active ? "linear-gradient(#efefef, #fbfbfb)" : "#dddddd"};
`;
